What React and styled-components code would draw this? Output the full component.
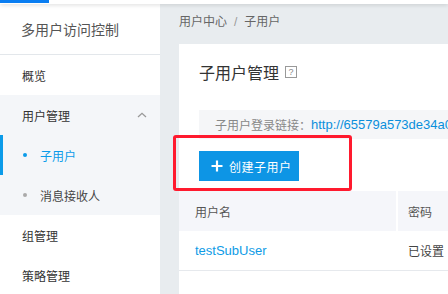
import React from "react";
import styled, { createGlobalStyle } from "styled-components";

const GlobalStyle = createGlobalStyle`
  html, body {
    margin: 0;
    padding: 0;
    width: 448px;
    height: 294px;
    overflow: hidden;
    background: #e8ecef;
    font-family: "Liberation Sans", "Noto Sans CJK SC", sans-serif;
  }
  * {
    box-sizing: border-box;
  }
`;

const Page = styled.div`
  position: relative;
  display: flex;
  flex-direction: column;
  height: 294px;
  overflow: hidden;
`;

// only the lower edge of the console top bar is in view
const TopBar = styled.div`
  flex: 0 0 4px;
  background: #fff;
  box-shadow: 0 1px 4px rgba(0, 0, 0, 0.14);
  position: relative;
  z-index: 2;
`;

// blue logo strip sitting on the top bar's left end
const LogoStrip = styled.div`
  position: absolute;
  top: 0;
  left: 0;
  width: 49px;
  height: 3px;
  background: #0a7ef2;
  z-index: 5;
`;

const Body = styled.div`
  flex: 1;
  display: flex;
  min-height: 0;
  overflow: hidden;
`;

const Sidebar = styled.div`
  width: 160px;
  flex-shrink: 0;
  background: #fff;
  overflow: hidden;
`;

const SideTitle = styled.div`
  height: 51px;
  padding-left: 21px;
  display: flex;
  align-items: center;
  font-size: 14px;
  color: #555;
  border-bottom: 1px solid #e3e7eb;
`;

const Group = styled.div`
  background: ${(p) => (p.open ? "#f4f6f9" : "transparent")};
`;

const MenuItem = styled.div`
  height: 40px;
  display: flex;
  align-items: center;
  justify-content: space-between;
  padding: 0 13px 0 22px;
  font-size: 12px;
  color: #333;
`;

const SubItem = styled.div`
  position: relative;
  height: 40px;
  display: flex;
  align-items: center;
  padding-left: 23px;
  font-size: 12px;
  color: ${(p) => (p.active ? "#0b9be9" : "#444")};

  &::before {
    content: "";
    width: 4px;
    height: 4px;
    border-radius: 50%;
    margin-right: 13px;
    background: ${(p) => (p.active ? "#0b9be9" : "#aaa")};
  }

  &::after {
    content: "";
    display: ${(p) => (p.active ? "block" : "none")};
    position: absolute;
    left: 0;
    top: 0;
    width: 3px;
    height: 40px;
    background: #0b9be9;
  }
`;

const Main = styled.div`
  flex: 1;
  display: flex;
  flex-direction: column;
  padding-left: 19px;
  min-width: 0;
  overflow: hidden;
`;

const Breadcrumb = styled.div`
  flex-shrink: 0;
  height: 40px;
  line-height: 36px;
  font-size: 12px;
  color: #666;
`;

const Sep = styled.span`
  padding: 0 7px;
  color: #999;
`;

const Card = styled.div`
  flex: 1;
  width: 900px;
  background: #fff;
`;

const CardHead = styled.div`
  height: 56px;
  padding-left: 20px;
  display: flex;
  align-items: center;
  gap: 6px;
  font-size: 16px;
  color: #333;
`;

const HelpBox = styled.span`
  width: 12px;
  height: 12px;
  border: 1px solid #999;
  color: #888;
  font-size: 9px;
  line-height: 10px;
  text-align: center;
`;

const CardBody = styled.div`
  padding: 10px 20px 0;
`;

const InfoBar = styled.div`
  height: 29px;
  padding-left: 16px;
  display: flex;
  align-items: center;
  background: #f5f6f8;
  font-size: 12px;
  color: #888;
  white-space: nowrap;
`;

const Link = styled.span`
  font-size: 13px;
  color: #0a8fdc;
`;

const Toolbar = styled.div`
  position: relative;
  padding: 12px 0 10px;
`;

const Annotation = styled.div`
  position: absolute;
  left: -26px;
  top: -4px;
  width: 179px;
  height: 56px;
  border: 3px solid #ff1a2e;
  border-radius: 3px;
  pointer-events: none;
`;

const PrimaryButton = styled.button`
  width: 100px;
  height: 30px;
  padding: 0 0 0 12px;
  border: none;
  background: #0d95e5;
  color: #fff;
  font-family: inherit;
  font-size: 12px;
  display: flex;
  align-items: center;
  gap: 6px;
  letter-spacing: 0.5px;
`;

const Table = styled.div`
  display: grid;
  grid-template-columns: 219px 1fr;
`;

const HeadCell = styled.div`
  height: 40px;
  display: flex;
  align-items: center;
  padding-left: ${(p) => (p.first ? "16px" : "10px")};
  background: #f5f6fa;
  border-right: ${(p) => (p.first ? "2px solid #fff" : "none")};
  font-size: 12px;
  color: #555;
`;

const Cell = styled.div`
  height: 40px;
  display: flex;
  align-items: center;
  padding-left: ${(p) => (p.first ? "16px" : "10px")};
  border-bottom: 1px solid #e6e9ed;
  font-size: ${(p) => (p.first ? "13px" : "12px")};
  color: ${(p) => (p.link ? "#0e9be6" : "#444")};
`;

function ChevronUp() {
  return (
    <svg width="10" height="6" viewBox="0 0 10 6" fill="none">
      <path d="M1 5 L5 1.3 L9 5" stroke="#999" strokeWidth="1.3" />
    </svg>
  );
}

function PlusIcon() {
  return (
    <svg width="12" height="12" viewBox="0 0 12 12">
      <path d="M6 0.5 V11.5 M0.5 6 H11.5" stroke="#fff" strokeWidth="2.2" />
    </svg>
  );
}

export default function App() {
  return (
    <Page>
      <GlobalStyle />
      <LogoStrip />
      <TopBar />
      <Body>
        <Sidebar>
          <SideTitle>多用户访问控制</SideTitle>
          <MenuItem>概览</MenuItem>
          <Group open>
            <MenuItem>
              用户管理
              <ChevronUp />
            </MenuItem>
            <SubItem active>子用户</SubItem>
            <SubItem>消息接收人</SubItem>
          </Group>
          <MenuItem>组管理</MenuItem>
          <MenuItem>策略管理</MenuItem>
        </Sidebar>
        <Main>
          <Breadcrumb>
            用户中心<Sep>/</Sep>子用户
          </Breadcrumb>
          <Card>
            <CardHead>
              子用户管理
              <HelpBox>?</HelpBox>
            </CardHead>
            <CardBody>
              <InfoBar>
                子用户登录链接：
                <Link>http://65579a573de34a01b23c/login</Link>
              </InfoBar>
              <Toolbar>
                <Annotation />
                <PrimaryButton>
                  <PlusIcon />
                  创建子用户
                </PrimaryButton>
              </Toolbar>
            </CardBody>
            <Table>
              <HeadCell first>用户名</HeadCell>
              <HeadCell>密码</HeadCell>
              <Cell first link>
                testSubUser
              </Cell>
              <Cell>已设置</Cell>
            </Table>
          </Card>
        </Main>
      </Body>
    </Page>
  );
}
